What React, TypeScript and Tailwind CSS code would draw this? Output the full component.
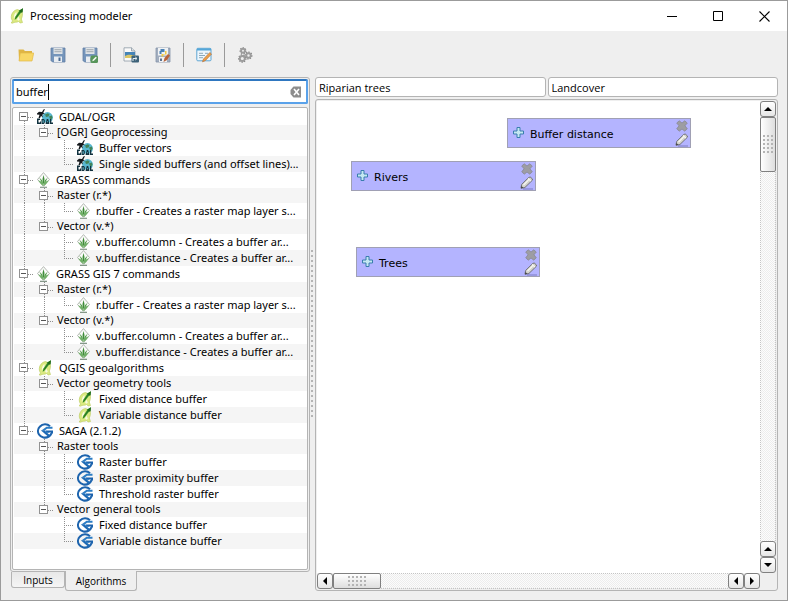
import { useState } from 'react';
import type { ReactNode } from 'react';

type IconName = 'gdal' | 'grass' | 'qgis' | 'saga';

interface Provider {
  name: string;
  icon: IconName;
  groups: { name: string; items: string[] }[];
}

const providers: Provider[] = [
  {
    name: 'GDAL/OGR',
    icon: 'gdal',
    groups: [
      { name: '[OGR] Geoprocessing', items: ['Buffer vectors', 'Single sided buffers (and offset lines)...'] },
    ],
  },
  {
    name: 'GRASS commands',
    icon: 'grass',
    groups: [
      { name: 'Raster (r.*)', items: ['r.buffer - Creates a raster map layer s...'] },
      { name: 'Vector (v.*)', items: ['v.buffer.column - Creates a buffer ar...', 'v.buffer.distance - Creates a buffer ar...'] },
    ],
  },
  {
    name: 'GRASS GIS 7 commands',
    icon: 'grass',
    groups: [
      { name: 'Raster (r.*)', items: ['r.buffer - Creates a raster map layer s...'] },
      { name: 'Vector (v.*)', items: ['v.buffer.column - Creates a buffer ar...', 'v.buffer.distance - Creates a buffer ar...'] },
    ],
  },
  {
    name: 'QGIS geoalgorithms',
    icon: 'qgis',
    groups: [{ name: 'Vector geometry tools', items: ['Fixed distance buffer', 'Variable distance buffer'] }],
  },
  {
    name: 'SAGA (2.1.2)',
    icon: 'saga',
    groups: [
      { name: 'Raster tools', items: ['Raster buffer', 'Raster proximity buffer', 'Threshold raster buffer'] },
      { name: 'Vector general tools', items: ['Fixed distance buffer', 'Variable distance buffer'] },
    ],
  },
];

/* ---------- Provider icons ---------- */

function QgisIcon({ className = 'w-4 h-4' }: { className?: string }) {
  return (
    <svg viewBox="0 0 16 16" className={className}>
      <path d="M8.500 1.500C5 2 2.500 5 2.300 8.500c-.1 2.200.5 3.800 1.700 4.700l-2 1.300 1 .8 3-1.100c1.500.2 2.700-.1 3.800-.9l1.200 1.700 2.500-.5-1.200-3.500c1.200-2.500 1.500-5 .8-7.500z" fill="#dcea82" stroke="#b9c95a" strokeWidth=".6" />
      <path d="M7.500 4C5.800 5.200 4.700 7.500 4.800 10.500L7.500 7z" fill="#fbfde6" />
      <path d="M9.500 8.500l1.300 3.300-1.500 1-1.300-1.500z" fill="#f7fae0" />
      <path d="M14 .3l-3.300 1.900L6.500 8.500 5.600 12l1.900-1.400L12 4.800z" fill="#3a9430" />
      <path d="M14 .3l-.3 4-1.700.5-1.800-1.700.5-.9z" fill="#1f6b1a" />
      <path d="M11 4L6.500 10.500" stroke="#1f6b1a" strokeWidth=".7" />
    </svg>
  );
}

function GdalIcon() {
  return (
    <svg viewBox="0 0 16 16" className="w-4 h-4">
      <circle cx="10.500" cy="8.500" r="5.400" fill="#58b7cf" />
      <path d="M8 5.500l3-1.300 1.500 1.300-1 2-2.500.5zM12 7.500l3-1 .5 2.500-2 2z" fill="#43845a" />
      <path d="M0 4.500l2-1.800 3 .3L6.500.5 8 0l-.7 1.600-1 1.900 1.700 2-2-.8-.7 1.500.7 2-2-1.300-1 2.100H1.500l1-3.200L0 5.500z" fill="#15191c" />
      <path d="M0 9.500h3V11H1.500v2.500H3v-1h1V15H0zM4.500 10h2.300l1 1v3l-1 1H4.500zM8.500 15l1.300-5h1.400l1.300 5zM13 10h1.300v3.500H16V15h-3z" fill="#12323f" />
      <path d="M5.600 11.300h1v2.400h-1zM10.200 12.200h.8v1h-.8z" fill="#73cadb" />
    </svg>
  );
}

function GrassIcon() {
  return (
    <svg viewBox="0 0 13 16" className="w-[13px] h-4">
      <path d="M6.500.6L12.500 7.500l-6 6.700L.5 7.500z" fill="#fafbf9" stroke="#a3a8a2" strokeWidth=".8" />
      <path d="M6.500 13.800L5.500 7l1-4 1 4z" fill="#3f8b39" />
      <path d="M6.400 14L4.500 10.200 2.300 5.500l3.200 3.200zM6.600 14l1.900-3.800 2.200-4.700-3.200 3.200z" fill="#519c49" />
      <path d="M6.300 14.200L3.800 12 1 8.200l3.800 1.500zM6.700 14.200L9.200 12 12 8.200 8.200 9.700z" fill="#6fb066" />
      <path d="M3 15.300h7" stroke="#6f8574" strokeWidth="1.100" />
    </svg>
  );
}

function SagaIcon() {
  return (
    <svg viewBox="0 0 16 16" className="w-4 h-4">
      <path d="M13 3.200A6.800 6.300 0 0 0 3 3.500C.8 5.500.4 9 2 11.500c2 3.200 6.500 4 9.800 2 1.300-.8 2.300-2 2.800-3.300" fill="none" stroke="#1c63ad" strokeWidth="2.100" />
      <path d="M15.500 3.800H9.500L4 7.800l3.500 0L10 5.700h5.500z" fill="#2b7cc4" />
      <path d="M4 7.400h3.700l5.800 5.300-1.900 1.300z" fill="#1e6ab5" />
      <path d="M9 9.400V7.600h7v2.800h-1.800l-.4-1z" fill="#1c63ad" />
      <path d="M8.700 7.600l1 1.800h2.500" fill="none" stroke="#2b7cc4" strokeWidth=".9" />
    </svg>
  );
}

function ProviderIcon({ name }: { name: IconName }) {
  if (name === 'gdal') return <GdalIcon />;
  if (name === 'grass') return <GrassIcon />;
  if (name === 'qgis') return <QgisIcon />;
  return <SagaIcon />;
}

/* ---------- Toolbar icons ---------- */

function FolderIcon() {
  return (
    <svg viewBox="0 0 16 16" className="w-4 h-4">
      <path d="M.5 2.500h5L7 4h7v9H1z" fill="#dfb545" />
      <path d="M2.300 6h13.400L14 14H1z" fill="#f8d766" stroke="#e3b948" strokeWidth=".7" />
    </svg>
  );
}

function FloppyShape() {
  return (
    <>
      <path d="M1 1h14v14H2.500L1 13.500z" fill="#7595bb" stroke="#627fa3" strokeWidth=".8" />
      <path d="M3.500 1h9v6h-9z" fill="#dfe3e6" />
      <path d="M4.500 2.700h7M4.500 4.700h7" stroke="#9ba3aa" strokeWidth=".9" />
      <path d="M4 9.500h8V15H4z" fill="#e9edf1" />
      <path d="M8.500 10.500h2V14h-2z" fill="#4c6c94" />
    </>
  );
}

function SaveIcon() {
  return (
    <svg viewBox="0 0 16 16" className="w-4 h-4">
      <FloppyShape />
    </svg>
  );
}

function SaveAsIcon() {
  return (
    <svg viewBox="0 0 16 16" className="w-4 h-4">
      <FloppyShape />
      <rect x="8.500" y="8.500" width="7.500" height="7.500" rx="1.500" fill="#57955a" />
      <path d="M10.300 14.300l.4-1.600 3-3 1.200 1.100-3 3z" fill="#f3f8f1" />
    </svg>
  );
}

function ExportImageIcon() {
  return (
    <svg viewBox="0 0 16 16" className="w-4 h-4">
      <path d="M1 .8h7.500L12 4v10H1z" fill="#fafafa" stroke="#8d9aa5" strokeWidth=".8" />
      <path d="M8.500.8V4H12" fill="#dde2e6" stroke="#8d9aa5" strokeWidth=".8" />
      <path d="M2 5h10v6H2z" fill="#4584b8" />
      <path d="M2 9c3-2 6-1.500 10-.5V11H2z" fill="#dcc766" />
      <rect x="8.500" y="8.500" width="7.500" height="7" rx="1" fill="#3d6279" />
      <path d="M10 14v-2.500h3.500M12.300 10l1.700 1.500-1.700 1.500" fill="none" stroke="#e8f0f4" strokeWidth="1" />
    </svg>
  );
}

function ExportPythonIcon() {
  return (
    <svg viewBox="0 0 16 16" className="w-4 h-4">
      <path d="M1 1h14v14H1z" fill="#a3afc0" stroke="#8694a9" strokeWidth=".8" />
      <path d="M3 1h10v7.500H3zM4 10h8v5H4z" fill="#f0f2f4" />
      <path d="M5.500 2h4v3H6.500v2H4.500V4h1z" fill="#4a82b5" />
      <path d="M11.500 4v3.500H8.500v2H6.500V7h3.500V4z" fill="#f0cb45" />
      <path d="M8.500 15l1-4 3.500-4 2 1.500-3 4.500z" fill="#b8643a" />
      <path d="M5 11.500h2V14H5z" fill="#5d738f" />
    </svg>
  );
}

function EditHelpIcon() {
  return (
    <svg viewBox="0 0 16 16" className="w-4 h-4">
      <rect x=".8" y="1.300" width="14.200" height="12.500" rx="1" fill="#edf6fc" stroke="#5ea6d3" strokeWidth="1" />
      <path d="M1 1.500h14v2H1z" fill="#55a6d8" />
      <path d="M3 6.300h4M3 8.500h6M3 10.700h4M9 6.300h3" stroke="#8fa9ba" strokeWidth="1" />
      <path d="M6.500 14.800l1-2.800 6.300-6.500 1.700 1.600-6.300 6.600z" fill="#eda04a" stroke="#b1652a" strokeWidth=".6" />
    </svg>
  );
}

function GearsIcon() {
  return (
    <svg viewBox="0 0 16 16" className="w-4 h-4" fill="none">
      <g stroke="#7f7f7f" strokeWidth="1.300" strokeDasharray="1.300 1.200">
        <circle cx="6" cy="3.700" r="2.800" />
        <circle cx="5.300" cy="11.500" r="3.600" />
        <circle cx="11.500" cy="8.500" r="3.300" />
      </g>
      <g stroke="#9c9c9c" strokeWidth="1.900">
        <circle cx="6" cy="3.700" r="1.900" />
        <circle cx="5.300" cy="11.500" r="2.500" />
        <circle cx="11.500" cy="8.500" r="2.200" />
      </g>
    </svg>
  );
}

function ToolButton({ label, children }: { label: string; children: ReactNode }) {
  return (
    <button aria-label={label} title={label} className="w-8 h-8 flex items-center justify-center rounded hover:bg-[#e0e6ee]">
      {children}
    </button>
  );
}

function ToolSeparator() {
  return (
    <div className="w-[9px] flex justify-center">
      <div className="w-px h-6 bg-[#9a9a9a]" />
    </div>
  );
}

/* ---------- Algorithm tree ---------- */

const vLine = 'absolute left-2.5 w-px bg-[repeating-linear-gradient(to_bottom,#8f8f8f_0_1px,transparent_1px_2px)]';
const hLine = 'absolute left-2.5 right-0 top-2 h-px bg-[repeating-linear-gradient(to_right,#8f8f8f_0_1px,transparent_1px_2px)]';

// One 20px indent column holding the dotted connector lines
function Guide({ up, down, across, children }: { up?: boolean; down?: boolean; across?: boolean; children?: ReactNode }) {
  return (
    <div className="relative w-5 self-stretch shrink-0">
      {up && <i className={`${vLine} top-0 h-2`} />}
      {down && <i className={`${vLine} top-2 bottom-0`} />}
      {across && <i className={hLine} />}
      {children}
    </div>
  );
}

function Expander({ label }: { label: string }) {
  return (
    <button
      aria-label={`Collapse ${label}`}
      className="absolute left-[5px] top-[3px] w-[9px] h-[9px] flex items-center justify-center bg-white border border-[#929292]"
    >
      <span className="w-[5px] h-px bg-[#555]" />
    </button>
  );
}

function AlgorithmTree() {
  const rows: ReactNode[] = [];
  providers.forEach((provider, p) => {
    const moreProviders = p < providers.length - 1;
    rows.push(
      <li key={`${p}`} className="h-4 flex items-center even:bg-[#f5f5f5]">
        <Guide up={p > 0} down={moreProviders} across>
          <Expander label={provider.name} />
        </Guide>
        <span className="flex items-center gap-1.5 pl-[3px]">
          <ProviderIcon name={provider.icon} />
          {provider.name}
        </span>
      </li>
    );
    provider.groups.forEach((group, g) => {
      const moreGroups = g < provider.groups.length - 1;
      rows.push(
        <li key={`${p}-${g}`} className="h-[15px] flex items-start even:bg-[#f5f5f5]">
          <Guide up={moreProviders} down={moreProviders} />
          <Guide up down={moreGroups} across>
            <Expander label={group.name} />
          </Guide>
          <span className="pl-[3px] leading-[14px]">{group.name}</span>
        </li>
      );
      group.items.forEach((item, i) => {
        rows.push(
          <li key={`${p}-${g}-${i}`} className="h-4 flex items-center even:bg-[#f5f5f5]">
            <Guide up={moreProviders} down={moreProviders} />
            <Guide up={moreGroups} down={moreGroups} />
            <Guide up down={i < group.items.length - 1} across />
            <span className="flex items-center gap-1.5 pl-[3px]">
              <ProviderIcon name={provider.icon} />
              {item}
            </span>
          </li>
        );
      });
    });
  });
  return <ul className="whitespace-nowrap">{rows}</ul>;
}

/* ---------- Model canvas ---------- */

function ModelNode({ label, className }: { label: string; className: string }) {
  return (
    <div className={`absolute h-[30px] flex items-center pl-[5px] pr-px bg-[#b4b4ff] border border-[#a0a0b4] ${className}`}>
      <svg viewBox="0 0 11 11" className="w-[11px] h-[11px] mb-0.5">
        <path d="M4 .5h3V4h3.500v3H7v3.500H4V7H.5V4H4z" fill="#c4e8f2" stroke="#397eae" />
      </svg>
      <span className="flex-1 pl-1.5 pt-1 text-[11px] font-['DejaVu_Sans',sans-serif]">{label}</span>
      <div className="flex flex-col items-center">
        <button aria-label={`Delete ${label}`} className="w-3.5 h-3.5 flex items-center justify-center">
          <svg viewBox="0 0 12 12" className="w-3 h-3">
            <path d="M3.300.8L6 3l2.700-2.200L11.300 3 9 5.800l2.300 3-2.600 2.400L6 9l-2.700 2.200L.7 8.800l2.300-3L.7 3z" fill="#9d9da3" stroke="#85858f" strokeWidth=".7" />
          </svg>
        </button>
        <button aria-label={`Edit ${label}`} className="w-3.5 h-3.5 flex items-center justify-center">
          <svg viewBox="0 0 14 14" className="w-3.5 h-3.5">
            <path d="M3 13h10" stroke="#7d7dc0" />
            <path d="M1 12.300l.6-3.800L8.700 1.500l1.500-.5 2.300 2-.4 1.500-7.200 7z" fill="#d4d4cd" stroke="#66666b" strokeWidth=".9" />
            <path d="M1 12.300l.4-2.300 2 1.700z" fill="#444" />
            <path d="M8 2.500l3 2.700M3.500 9l5-5" stroke="#f8f8f3" strokeWidth="1.100" />
          </svg>
        </button>
      </div>
    </div>
  );
}

const arrows = {
  up: 'M4 2l4 4H0z',
  down: 'M0 2h8L4 6z',
  left: 'M2 4l4-4v8z',
  right: 'M6 4L2 0v8z',
};

function ScrollButton({ dir }: { dir: keyof typeof arrows }) {
  return (
    <button
      aria-label={`Scroll ${dir}`}
      className="w-4 h-4 shrink-0 flex items-center justify-center rounded-[3px] border border-[#808080] bg-linear-to-b from-white to-[#e6e6e6]"
    >
      <svg viewBox="0 0 8 8" className="w-2 h-2">
        <path d={arrows[dir]} />
      </svg>
    </button>
  );
}

const track = 'flex-1 bg-[repeating-conic-gradient(#ededed_0_25%,#fcfcfc_0_50%)] bg-[length:2px_2px] border-dotted border-[#c4c4c4]';
const dots = 'bg-[radial-gradient(circle_at_1px_1px,#b4b4b4_1px,transparent_1px)]';

function App() {
  const [search, setSearch] = useState('buffer');
  const [modelName, setModelName] = useState('Riparian trees');
  const [groupName, setGroupName] = useState('Landcover');

  return (
    <div className="h-screen flex flex-col overflow-hidden border border-[#9b9b9b] bg-[#efefef] text-black text-[11px] leading-4 font-['Noto_Sans',sans-serif]">
      {/* Title bar */}
      <header className="h-[30px] shrink-0 flex items-center bg-white pl-2">
        <QgisIcon />
        <h1 className="flex-1 pl-[5px]">Processing modeler</h1>
        <div className="flex h-full">
          <button aria-label="Minimize" className="w-[46px] flex items-center justify-center">
            <svg viewBox="0 0 11 11" className="w-[11px] h-[11px]"><path d="M0 5.500h10" stroke="#000" /></svg>
          </button>
          <button aria-label="Maximize" className="w-[46px] flex items-center justify-center">
            <svg viewBox="0 0 11 11" className="w-[11px] h-[11px]"><path d="M.5 .5h9v9h-9z" fill="none" stroke="#000" /></svg>
          </button>
          <button aria-label="Close" className="w-[46px] flex items-center justify-center">
            <svg viewBox="0 0 11 11" className="w-[11px] h-[11px]"><path d="M.5 .5l10 10M10.500 .5l-10 10" stroke="#000" strokeWidth="1.100" /></svg>
          </button>
        </div>
      </header>

      {/* Toolbar */}
      <div role="toolbar" className="h-[46px] shrink-0 flex items-center pl-[9px] pt-0.5">
        <ToolButton label="Open model"><FolderIcon /></ToolButton>
        <ToolButton label="Save"><SaveIcon /></ToolButton>
        <ToolButton label="Save as"><SaveAsIcon /></ToolButton>
        <ToolSeparator />
        <ToolButton label="Export as image"><ExportImageIcon /></ToolButton>
        <ToolButton label="Export as Python script"><ExportPythonIcon /></ToolButton>
        <ToolSeparator />
        <ToolButton label="Edit model help"><EditHelpIcon /></ToolButton>
        <ToolSeparator />
        <ToolButton label="Run model"><GearsIcon /></ToolButton>
      </div>

      <main className="flex-1 min-h-0 flex pl-[9px] pr-[9px] pb-[9px]">
        {/* Algorithms panel */}
        <section className="w-[300px] shrink-0 flex flex-col">
          <div className="flex-1 min-h-0 flex flex-col gap-[3px] p-px border border-[#b4b4b4] rounded-[3px]">
            <div className="h-[25px] shrink-0 flex items-center bg-white border-2 border-[#5aa2ea] border-t-[#2f77c0] rounded-[2px] pl-0.5 pr-1">
              <div className="relative flex-1 min-w-0">
                <input
                  aria-label="Search algorithms"
                  value={search}
                  onChange={(e) => setSearch(e.target.value)}
                  className="w-full outline-none"
                />
                {/* caret */}
                <span className="absolute inset-y-0 left-0 flex pointer-events-none">
                  <span className="invisible">{search}</span>
                  <span className="w-px bg-black" />
                </span>
              </div>
              <button aria-label="Clear" onClick={() => setSearch('')}>
                <svg viewBox="0 0 12 12" className="w-3 h-3">
                  <path d="M3.500.5H11v11H3.500L.5 8V4z" fill="#8d8d8d" />
                  <path d="M4 3l5 6M9 3L4 9" stroke="#fff" strokeWidth="1.600" />
                </svg>
              </button>
            </div>
            <div className="flex-1 min-h-0 overflow-hidden bg-white border border-[#b4b4b4] rounded-[2px] pl-px pt-px">
              <AlgorithmTree />
            </div>
          </div>
          <div role="tablist" className="h-[19px] shrink-0 flex items-start pl-px font-['Open_Sans',sans-serif] text-[10px]">
            <button role="tab" aria-selected="false" className="h-4 w-[54px] leading-4 border border-t-0 border-[#b4b4b4] rounded-b-[3px] bg-linear-to-b from-[#e8e8e8] to-[#f5f5f5]">
              Inputs
            </button>
            <button role="tab" aria-selected="true" className="h-5 w-[72px] -mt-px border border-t-0 border-[#b4b4b4] rounded-b-[3px] bg-[#efefef]">
              Algorithms
            </button>
          </div>
        </section>

        {/* Splitter */}
        <div className="w-[5px] shrink-0 flex items-center justify-center">
          <div className={`w-[3px] h-[168px] bg-[length:3px_5px] ${dots}`} />
        </div>

        {/* Model editor */}
        <section className="flex-1 min-w-0 flex flex-col gap-0.5">
          <div className="flex gap-0.5 font-['Open_Sans',sans-serif]">
            <input
              aria-label="Model name"
              value={modelName}
              onChange={(e) => setModelName(e.target.value)}
              className="flex-1 min-w-0 h-5 px-[3px] bg-white border border-[#b4b4b4] rounded-[3px]"
            />
            <input
              aria-label="Group name"
              value={groupName}
              onChange={(e) => setGroupName(e.target.value)}
              className="flex-1 min-w-0 h-5 px-[3px] bg-white border border-[#b4b4b4] rounded-[3px]"
            />
          </div>
          <div className="flex-1 min-h-0 grid grid-cols-[1fr_16px] grid-rows-[1fr_16px] p-px border border-[#b4b4b4] rounded-[3px]">
            <div className="relative bg-white overflow-hidden">
              <ModelNode label="Buffer distance" className="left-[190px] top-[17px] w-[184px]" />
              <ModelNode label="Rivers" className="left-[34px] top-[60px] w-[185px]" />
              <ModelNode label="Trees" className="left-[39px] top-[146px] w-[184px]" />
            </div>
            <div className="flex flex-col">
              <ScrollButton dir="up" />
              <div className="h-[55px] shrink-0 flex items-center justify-center rounded-[2px] border border-[#808080] bg-linear-to-r from-white to-[#dedede]">
                <div className={`w-[11px] h-[19px] bg-[length:4px_4px] ${dots}`} />
              </div>
              <div className={`${track} border-x`} />
              <ScrollButton dir="up" />
              <ScrollButton dir="down" />
            </div>
            <div className="flex">
              <ScrollButton dir="left" />
              <div className="w-12 shrink-0 flex items-center justify-center rounded-[2px] border border-[#808080] bg-linear-to-b from-white to-[#dedede]">
                <div className={`w-[19px] h-[11px] bg-[length:4px_4px] ${dots}`} />
              </div>
              <div className={`${track} border-y`} />
              <ScrollButton dir="left" />
              <ScrollButton dir="right" />
            </div>
            <div />
          </div>
        </section>
      </main>
    </div>
  );
}

export default App;
